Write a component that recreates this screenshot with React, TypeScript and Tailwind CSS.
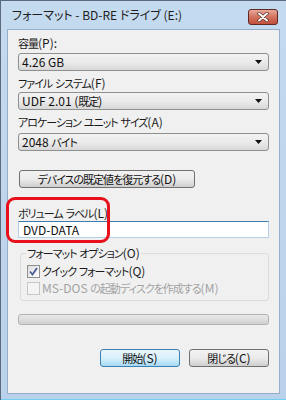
import React from "react";

// 共通フォント
const font = {
  fontFamily: '"Noto Sans CJK JP", "Noto Sans", sans-serif',
  fontFeatureSettings: '"palt"',
};

// 日本語部分だけ詰めて表示 (Meiryo UI 風の幅に寄せる)
function JP({ text }: { text: string }) {
  const parts = text.split(/([\u3000-\u30ff\u4e00-\u9fff\uff00-\uffef]+)/);
  return (
    <>
      {parts.map((p, i) =>
        /[\u3000-\u30ff\u4e00-\u9fff\uff00-\uffef]/.test(p) ? (
          <span key={i} className="text-[11px] tracking-[-1px]">
            {p}
          </span>
        ) : (
          <span key={i}>{p}</span>
        )
      )}
    </>
  );
}

function Label({ text, className }: { text: string; className?: string }) {
  return (
    <div className={["h-[16px] whitespace-nowrap text-[12px] leading-[16px] text-[#1a1a1a]", className ?? ""].join(" ")}>
      <JP text={text} />
    </div>
  );
}

function Combo({ value }: { value: string }) {
  return (
    <div className="flex h-[18px] w-full items-center justify-between rounded-[3px] border border-[#8e8f8f] bg-gradient-to-b from-[#f2f2f2] via-[#ebebeb] to-[#d8d8d8] pl-[3px] pr-[6px]">
      <span className="whitespace-nowrap text-[12px] leading-none text-[#111]">
        <JP text={value} />
      </span>
      <svg width="7" height="4" viewBox="0 0 7 4">
        <path d="M0 0 H7 L3.5 4 Z" fill="#111" />
      </svg>
    </div>
  );
}

function Button({ label, primary, className }: { label: string; primary?: boolean; className?: string }) {
  const base = primary
    ? "border-[#3c7fb1] from-[#eaf6fd] via-[#d9f0fc] to-[#a7d9f5]"
    : "border-[#707070] from-[#f2f2f2] via-[#ebebeb] to-[#cfcfcf]";
  return (
    <div
      className={[
        "flex h-[18px] items-center justify-center whitespace-nowrap rounded-[3px] border bg-gradient-to-b text-[12px] leading-none text-[#111]",
        base,
        className ?? "",
      ].join(" ")}
    >
      <JP text={label} />
    </div>
  );
}

function CheckBox({ checked, disabled }: { checked?: boolean; disabled?: boolean }) {
  return (
    <div
      className={[
        "flex h-[13px] w-[13px] shrink-0 items-center justify-center border",
        disabled ? "border-[#c6c6c6] bg-[#f4f4f4]" : "border-[#8f8f8f] bg-gradient-to-br from-[#dcdcdc] to-[#ffffff]",
      ].join(" ")}
    >
      {checked && (
        <svg width="9" height="9" viewBox="0 0 9 9">
          <path d="M1 4.5 L3.5 7.5 L8 1" stroke="#4a5f97" strokeWidth="1.8" fill="none" />
        </svg>
      )}
    </div>
  );
}

export default function App() {
  return (
    <div className="relative h-[400px] w-[286px] overflow-hidden" style={font}>
      <div className="flex h-full w-full flex-col border-l border-t border-[#5b6b7c] bg-gradient-to-b from-[#c4daef] to-[#b9d1ea]">
        {/* タイトルバー */}
        <div className="flex h-[28px] shrink-0 items-center justify-between pl-[11px] pr-[8px]">
          <span className="text-[12px] leading-none text-[#1e1e1e]">フォーマット - BD-RE ドライブ (E:)</span>
          <div className="mt-[3px] flex h-[16px] w-[30px] items-center justify-center rounded-[3px] border border-[#5e2a22] bg-gradient-to-b from-[#e9a99b] via-[#d2735f] to-[#c24f3c]">
            <svg width="12" height="10" viewBox="0 0 12 10">
              <path d="M2 1.5 L10 8.5 M10 1.5 L2 8.5" stroke="#5a2b22" strokeWidth="3.4" strokeLinecap="round" />
              <path d="M2 1.5 L10 8.5 M10 1.5 L2 8.5" stroke="#ffffff" strokeWidth="2" strokeLinecap="round" />
            </svg>
          </div>
        </div>

        {/* 本体 */}
        <div className="mx-[6px] flex h-[365px] flex-col border border-[#97aecb] bg-[#f0f0f0] px-[10px]">
          <Label text="容量(P):" className="mt-[5px]" />
          <div className="mt-[2px]">
            <Combo value="4.26 GB" />
          </div>
          <Label text="ファイル システム(F)" className="mt-[4px]" />
          <div className="mt-[1px]">
            <Combo value="UDF 2.01 (既定)" />
          </div>
          <Label text="アロケーション ユニット サイズ(A)" className="mt-[4px]" />
          <div className="mt-[3px]">
            <Combo value="2048 バイト" />
          </div>
          <div className="mt-[19px]">
            <Button label="デバイスの既定値を復元する(D)" className="ml-[1px] w-[176px]" />
          </div>

          <Label text="ボリューム ラベル(L)" className="mt-[17px]" />
          <div className="flex h-[17px] items-center border border-[#b5cfe7] border-t-[#3d7bad] bg-white pl-[4px] text-[12px] leading-none text-[#111]">
            DVD-DATA
          </div>

          {/* フォーマット オプション */}
          <div className="relative ml-[2px] mt-[15px] h-[48px] rounded-[3px] border border-[#dcdcdc]">
            <div className="absolute -top-[9px] left-[5px] whitespace-nowrap bg-[#f0f0f0] px-[1px] text-[12px] leading-[16px] text-[#1a1a1a]">
              <JP text="フォーマット オプション(O)" />
            </div>
            <div className="mt-[9px] flex items-center gap-[2px] pl-[6px]">
              <CheckBox checked />
              <span className="whitespace-nowrap text-[12px] leading-[16px] text-[#1a1a1a]">
                <JP text="クイック フォーマット(Q)" />
              </span>
            </div>
            <div className="mt-[1px] flex items-center gap-[2px] pl-[6px]">
              <CheckBox disabled />
              <span className="whitespace-nowrap text-[12px] leading-[16px] text-[#a3a3a3]">
                <JP text="MS-DOS の起動ディスクを作成する(M)" />
              </span>
            </div>
          </div>

          <div className="mt-[13px] h-[11px] rounded-[3px] border border-[#b2b2b2] bg-gradient-to-b from-[#e8e8e8] via-[#dedede] to-[#cfcfcf]" />

          <div className="mt-[24px] flex justify-end gap-[9px]">
            <Button label="開始(S)" primary className="w-[80px]" />
            <Button label="閉じる(C)" className="w-[80px]" />
          </div>
        </div>
        <div className="flex-1 border-b border-[#6fd0f0]" />
      </div>

      {/* 赤い注釈枠 */}
      <div className="absolute left-[6px] top-[197px] h-[46px] w-[104px] rounded-[9px] border-[3px] border-[#e8101a]" />
    </div>
  );
}
